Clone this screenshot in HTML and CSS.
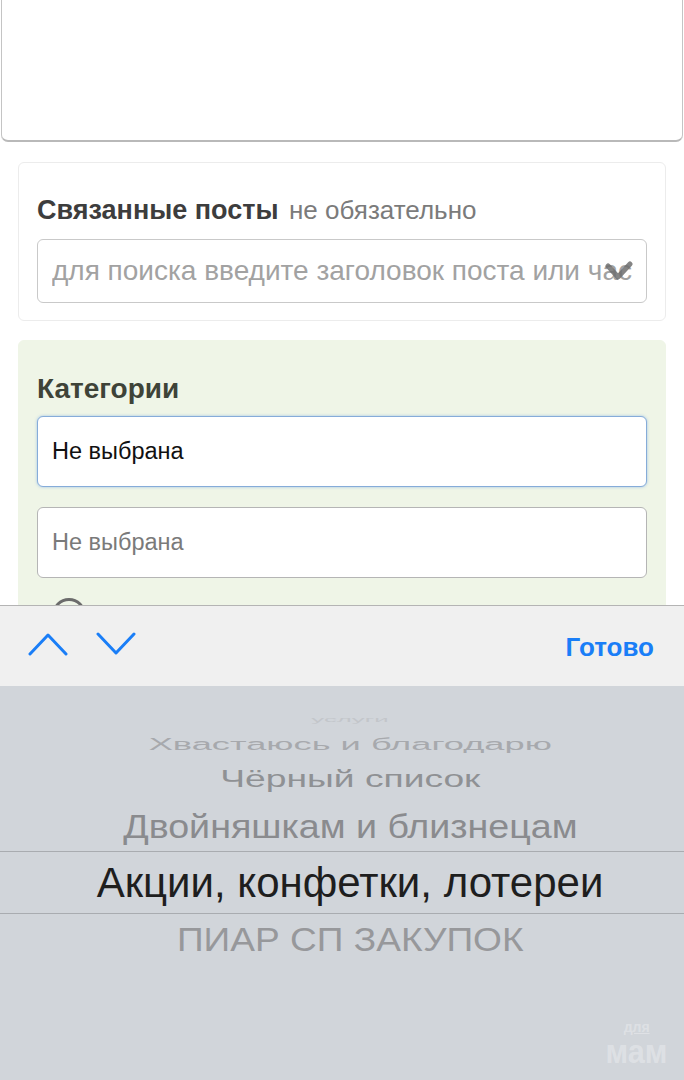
FILE: index.html
```html
<!DOCTYPE html>
<html lang="ru">
<head>
<meta charset="utf-8">
<title>Категории</title>
<link rel="stylesheet" href="styles.css">
</head>
<body>
<div class="page">
  <div class="textarea"></div>

  <section class="card">
    <h2 class="card-title">Связанные посты <span class="optional">не обязательно</span></h2>
    <div class="field field-search">
      <span class="placeholder">для поиска введите заголовок поста или часть текста</span>
      <svg class="tick" width="28" height="22" viewBox="0 0 28 22"><path d="M3 5 L13 16 L25 3" fill="none" stroke="#6f6f6f" stroke-width="5" stroke-linejoin="round" stroke-linecap="round" opacity="0.85"/></svg>
    </div>
  </section>

  <section class="card card-green">
    <h2 class="card-title">Категории</h2>
    <div class="field field-select focused"><span class="value">Не выбрана</span></div>
    <div class="field field-select"><span class="value muted">Не выбрана</span></div>
    <div class="radio"></div>
  </section>
</div>

<div class="keyboard">
  <div class="toolbar">
    <div class="arrows">
      <svg width="40" height="24" viewBox="0 0 40 24"><path d="M2 22 L20 3 L38 22" fill="none" stroke="#1a7ef7" stroke-width="3" stroke-linecap="round" stroke-linejoin="round"/></svg>
      <svg width="40" height="24" viewBox="0 0 40 24"><path d="M2 2 L20 21 L38 2" fill="none" stroke="#1a7ef7" stroke-width="3" stroke-linecap="round" stroke-linejoin="round"/></svg>
    </div>
    <span class="done">Готово</span>
  </div>
  <div class="picker">
    <div class="row r1"><span>услуги</span></div>
    <div class="row r2"><span>Хвастаюсь и благодарю</span></div>
    <div class="row r3"><span>Чёрный список</span></div>
    <div class="row r4"><span>Двойняшкам и близнецам</span></div>
    <div class="row sel"><span>Акции, конфетки, лотереи</span></div>
    <div class="row r6"><span>ПИАР СП ЗАКУПОК</span></div>
    <div class="watermark"><span class="wm-small">для</span><span class="wm-big">мам</span></div>
  </div>
</div>
</body>
</html>
```

FILE: styles.css
```css
html, body {
  margin: 0;
  padding: 0;
  background: #ffffff;
}
body {
  width: 684px;
  height: 1080px;
  overflow: hidden;
  font-family: "Liberation Sans", Arial, sans-serif;
  position: relative;
}
.page {
  display: flex;
  flex-direction: column;
}
.textarea {
  height: 140px;
  margin: 0 1px;
  border: 1px solid #c4c4c4;
  border-top: none;
  border-bottom: 2px solid #b9b9b9;
  border-radius: 0 0 7px 7px;
  background: #fff;
}
.card {
  margin: 20px 18px 0;
  border: 1px solid #ececec;
  border-radius: 6px;
  padding: 32px 18px 17px;
  display: flex;
  flex-direction: column;
}
.card-green {
  margin-top: 19px;
  background: #eff5e7;
  border-color: #eff5e7;
  padding-top: 33px;
  padding-bottom: 40px;
}
.card-title {
  margin: 0 0 14px;
  font-size: 27px;
  line-height: 30px;
  height: 30px;
  font-weight: bold;
  color: #3d3d3d;
}
.card-green .card-title {
  font-size: 28px;
  margin-bottom: 12px;
  color: #3e4338;
}
.optional {
  font-weight: normal;
  font-size: 26px;
  color: #7b7b7b;
  margin-left: 3px;
}
.field {
  box-sizing: border-box;
  border: 1px solid #c9c9c9;
  border-radius: 6px;
  background: #fff;
  display: flex;
  align-items: center;
  padding-left: 14px;
  position: relative;
  overflow: hidden;
}
.field-search {
  height: 64px;
  padding-right: 14px;
}
.placeholder {
  font-size: 28px;
  color: #a2a2a2;
  white-space: nowrap;
  overflow: hidden;
}
.tick {
  position: absolute;
  right: 13px;
  top: 21px;
}
.field-select {
  height: 71px;
  margin-bottom: 20px;
  border-color: #b5b5b5;
}
.field-select.focused {
  border-color: #86acd9;
  box-shadow: 0 0 3px rgba(90, 150, 230, 0.55);
}
.value {
  font-size: 23.5px;
  color: #111;
}
.value.muted {
  color: #7a7a7a;
}
.radio {
  width: 34px;
  height: 34px;
  margin-left: 15px;
  border: 3px solid #6b6b6b;
  border-radius: 50%;
  box-sizing: border-box;
}

/* keyboard overlay */
.keyboard {
  position: fixed;
  left: 0;
  right: 0;
  bottom: 0;
  height: 475px;
  display: flex;
  flex-direction: column;
}
.toolbar {
  height: 80px;
  background: #f0f0f0;
  border-top: 1px solid #b4b4b4;
  display: flex;
  align-items: center;
  justify-content: space-between;
  padding: 0 30px 0 28px;
  flex-shrink: 0;
}
.arrows {
  display: flex;
  gap: 28px;
  margin-top: -4px;
}
.done {
  font-size: 26px;
  font-weight: bold;
  color: #1a7ef7;
  margin-top: 2px;
}
.picker {
  flex: 1;
  background: #d1d5da;
  display: flex;
  flex-direction: column;
  padding-top: 24px;
  position: relative;
}
.row {
  display: flex;
  align-items: center;
  justify-content: center;
  white-space: nowrap;
  padding-left: 16px;
}
.row span {
  display: inline-block;
}
.r1 {
  height: 20px;
  font-size: 28px;
  color: #c3c6ca;
}
.r1 span { transform: scale(0.92, 0.25); }
.r2 {
  height: 29px;
  font-size: 29px;
  color: #a7a9ad;
}
.r2 span { transform: scale(1.25, 0.55); }
.r3 {
  height: 43px;
  font-size: 31px;
  color: #8f9194;
}
.r3 span { transform: scale(1.2, 0.76); margin-top: -4px; }
.r4 {
  height: 49px;
  font-size: 35px;
  color: #8a8b8e;
}
.r4 span { transform: scale(1.075, 0.95); }
.sel {
  height: 61px;
  border-top: 1px solid #a9acb0;
  border-bottom: 1px solid #a9acb0;
  font-size: 42px;
  color: #1e1e1e;
}
.r6 {
  height: 52px;
  font-size: 36px;
  color: #97989b;
}
.r6 span { transform: scale(1.03, 0.92); }
.watermark {
  position: absolute;
  right: 13px;
  bottom: 12px;
  display: flex;
  flex-direction: column;
  align-items: center;
  color: rgba(255, 255, 255, 0.3);
  font-weight: bold;
  line-height: 1;
}
.wm-small {
  font-size: 14px;
  text-decoration: underline;
}
.wm-big {
  font-size: 34px;
  transform: scaleX(0.9);
}
```
